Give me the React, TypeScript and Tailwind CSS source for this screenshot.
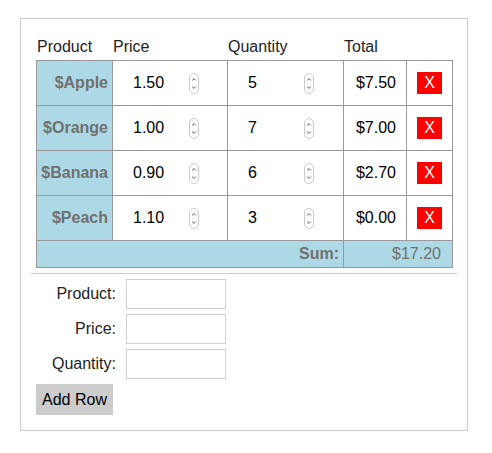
import React from 'react';

type Item = { name: string; price: string; qty: string; total: string };

const items: Item[] = [
  { name: '$Apple', price: '1.50', qty: '5', total: '$7.50' },
  { name: '$Orange', price: '1.00', qty: '7', total: '$7.00' },
  { name: '$Banana', price: '0.90', qty: '6', total: '$2.70' },
  { name: '$Peach', price: '1.10', qty: '3', total: '$0.00' },
];

const Spinner: React.FC = () => (
  <svg width="10" height="21" viewBox="0 0 10 21" className="shrink-0">
    <rect x="0.5" y="0.5" width="9" height="20" rx="4.5" fill="white" stroke="#c9c9c9" />
    <path d="M3.2 7.4 L5 5.6 L6.8 7.4" fill="none" stroke="#555" strokeWidth="1" />
    <path d="M3.2 13.6 L5 15.4 L6.8 13.6" fill="none" stroke="#555" strokeWidth="1" />
  </svg>
);

const NumberCell: React.FC<{ value: string }> = ({ value }) => (
  <div className="flex items-center border-r border-b border-[#999] bg-white">
    <span className="w-[56px] pl-[20px] box-content text-black">{value}</span>
    <Spinner />
  </div>
);

export default function App() {
  return (
    <div className="min-h-screen bg-white pt-[18px] pl-[20px] font-['Liberation_Sans',Arial,sans-serif] text-[16px] leading-[18px]">
      <div className="w-[448px] border border-[#cccccc] px-[10px] pt-[19px] pb-[15px]">
        {/* header */}
        <div className="ml-[6px] grid h-[22px] grid-cols-[76px_115px_116px_63px_46px] text-[#222]">
          <span>Product</span>
          <span>Price</span>
          <span>Quantity</span>
          <span>Total</span>
          <span />
        </div>

        {/* table body */}
        <div className="ml-[5px] grid w-[417px] grid-cols-[76px_115px_116px_63px_46px] grid-rows-[45px_45px_45px_45px_27px] border-t border-l border-[#999]">
          {items.map((it) => (
            <React.Fragment key={it.name}>
              <div className="flex items-center justify-end border-r border-b border-[#999] bg-[#add8e6] pr-[4px] font-bold text-[#707070]">
                {it.name}
              </div>
              <NumberCell value={it.price} />
              <NumberCell value={it.qty} />
              <div className="flex items-center justify-end border-r border-b border-[#999] pr-[10px] text-black">
                {it.total}
              </div>
              <div className="flex items-center justify-center border-r border-b border-[#999]">
                <button className="flex h-[22px] w-[25px] items-center justify-center bg-[#ff0000] text-white">X</button>
              </div>
            </React.Fragment>
          ))}
          <div className="col-span-3 flex items-center justify-end border-r border-b border-[#999] bg-[#add8e6] pr-[4px] font-bold text-[#707070]">
            Sum:
          </div>
          <div className="col-span-2 flex items-center justify-end border-r border-b border-[#999] bg-[#add8e6] pr-[11px] text-[#707070]">
            $17.20
          </div>
        </div>

        <hr className="mt-[5px] border-t border-[#cccccc]" />

        {/* add form */}
        <div className="mt-[5px] ml-[5px] flex flex-col gap-[5px]">
          {['Product:', 'Price:', 'Quantity:'].map((label) => (
            <div key={label} className="flex items-center gap-[10px]">
              <span className="w-[80px] text-right text-[#222]">{label}</span>
              <input className="h-[30px] w-[100px] border border-[#d0d0d0] px-1 outline-none" />
            </div>
          ))}
          <button className="h-[31px] w-[77px] bg-[#cccccc] text-black">Add Row</button>
        </div>
      </div>
    </div>
  );
}
